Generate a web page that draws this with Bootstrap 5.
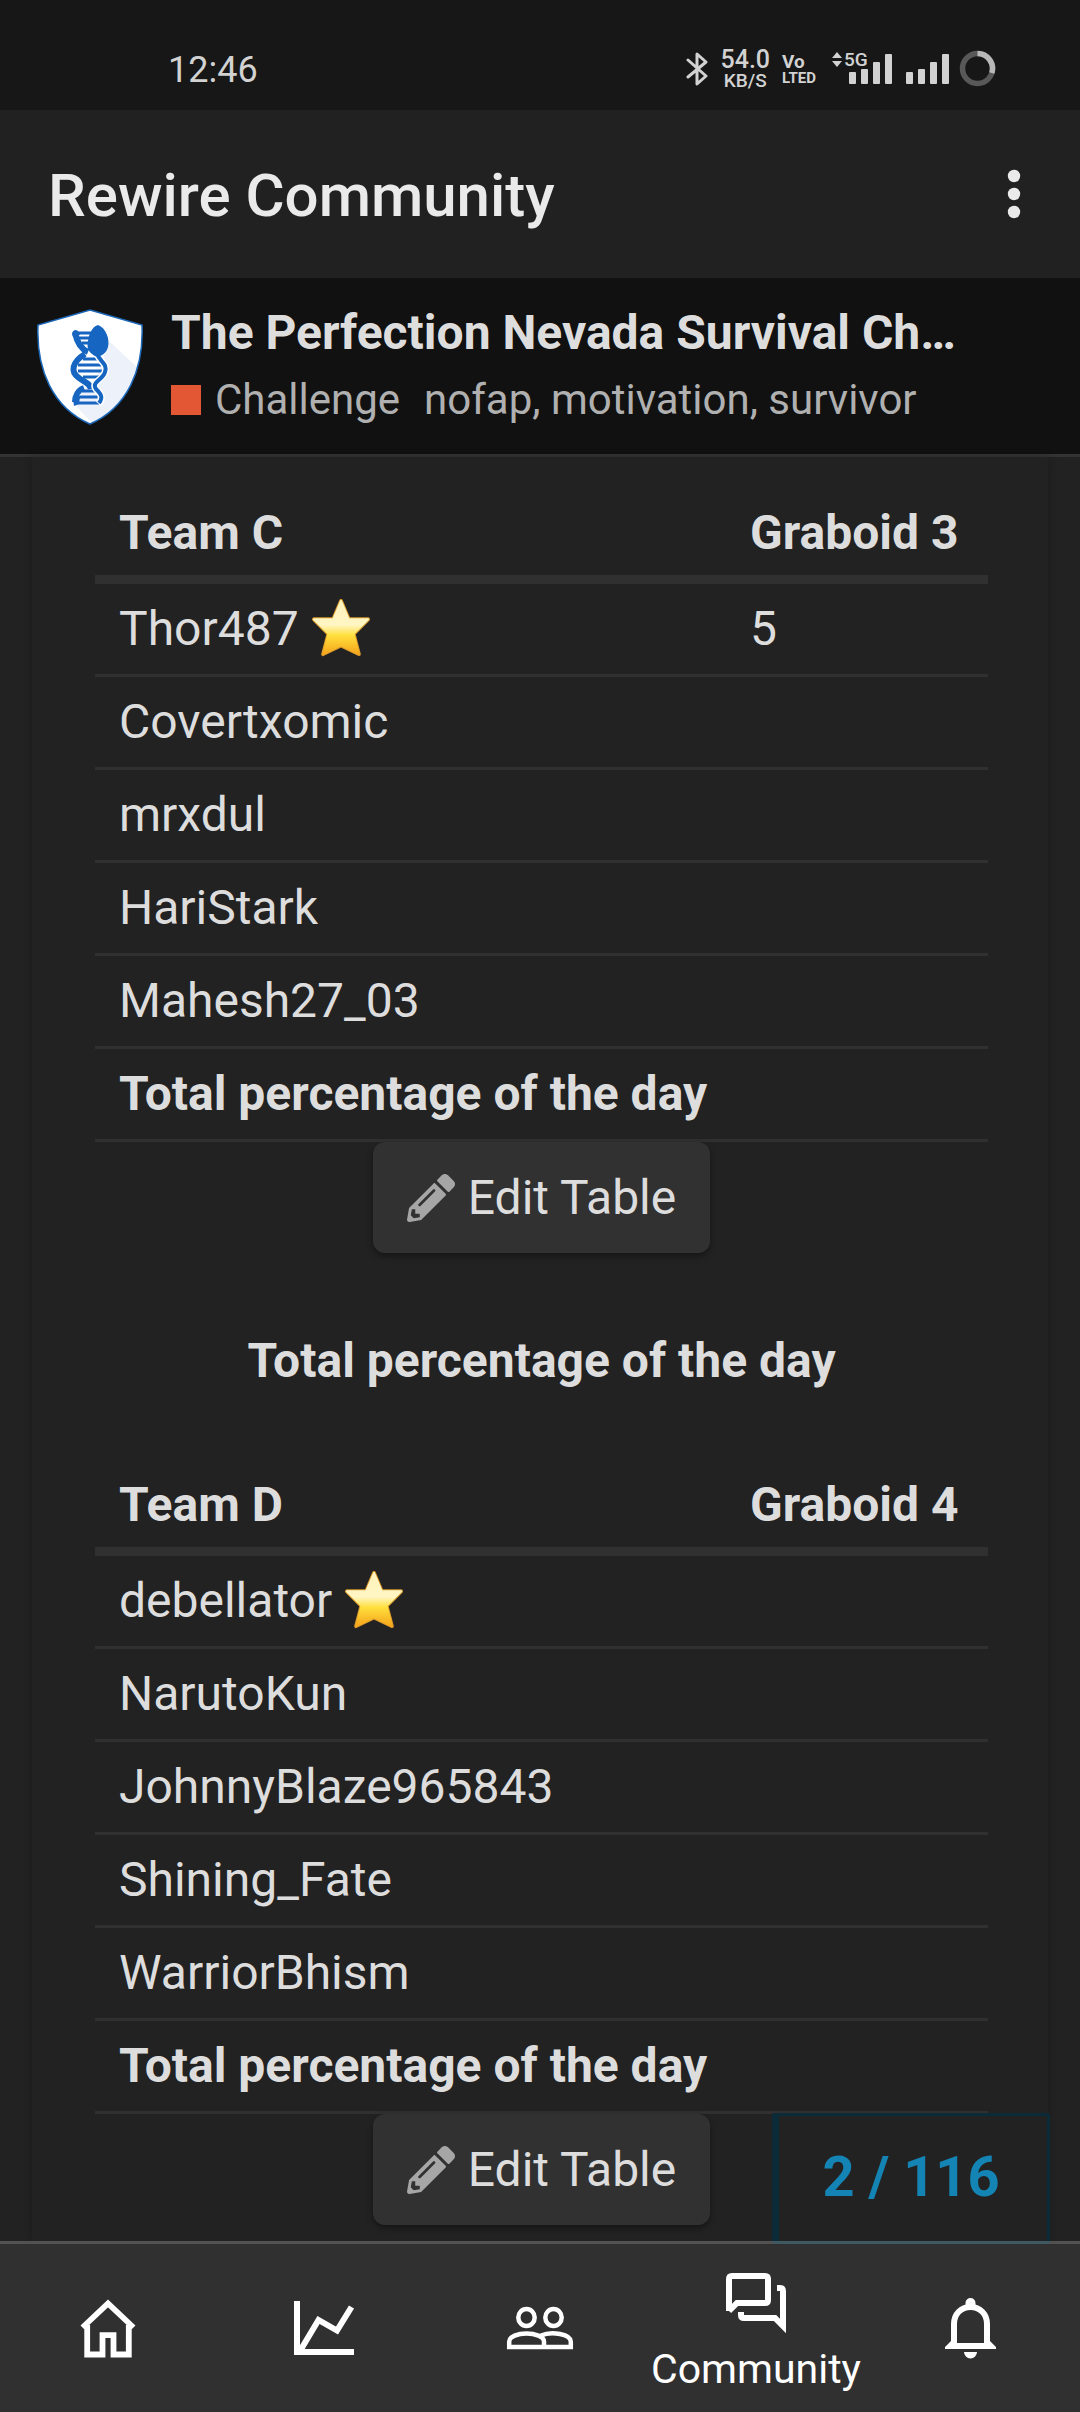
<!DOCTYPE html>
<html lang="en">
<head>
<meta charset="utf-8">
<meta name="viewport" content="width=device-width, initial-scale=1">
<title>Rewire Community</title>
<link href="https://cdn.jsdelivr.net/npm/bootstrap@5.3.0/dist/css/bootstrap.min.css" rel="stylesheet">
<style>
  body { background: #222; color: #ddd; font-family: Roboto, "Noto Sans", sans-serif; font-size: 48px; line-height: 72px; }
  a { color: inherit; text-decoration: none; }
  svg { flex: none; }
  .status-strip { background: #171717; color: #d2d2d2; height: 110px; padding: 26px 84px 0 168px; }
  .clock-text { font-size: 36px; line-height: 88px; }
  .net-speed { font-size: 25px; line-height: 20px; font-weight: 500; }
  .net-unit { font-size: 19px; line-height: 22px; font-weight: 500; }
  .volte-top { font-size: 19px; line-height: 16px; font-weight: 700; }
  .volte-bottom { font-size: 15px; line-height: 16px; font-weight: 700; }
  .five-g { font-size: 19px; font-weight: 500; }
  .app-bar { background: #212121; color: #eaeaea; height: 168px; padding: 0 40px 0 48px; }
  .app-title { font-size: 60px; line-height: 72px; font-weight: 500; padding-top: 4px; }
  .more-btn { width: 52px; height: 72px; }
  .topic-bar { background: #111; border-bottom: 3px solid #333; padding: 22px 122px 19px 36px; gap: 27px; }
  .topic-title { font-size: 48px; line-height: 65px; font-weight: 700; color: #ddd; }
  .topic-meta { font-size: 42px; line-height: 70px; color: #b0b0b0; }
  .cat-swatch { width: 30px; height: 30px; background: #e45735; margin-right: 14px; }
  .cat-name { margin-right: 24px; }
  .post-body { margin: 0 32px; padding: 30px 60px 19px 63px; box-shadow: 0 0 9px rgba(0,0,0,.2); }
  .team-table { width: 100%; border-collapse: separate; border-spacing: 0; }
  .team-table th, .team-table td { padding: 9px 9px 9px 24px; border-bottom: 3px solid #303030; white-space: nowrap; }
  .team-table thead th { padding-top: 10px; padding-bottom: 6px; border-bottom: 9px solid #303030; }
  .team-table th:last-child, .team-table td:last-child { width: 262px; }
  .team-table svg { margin-top: -8px; }
  .edit-btn { background: #313131; color: #ddd; font-size: 48px; line-height: 71px; padding: 20px 34px; border: 0; border-radius: 12px; box-shadow: 0 3px 6px rgba(0,0,0,.4); gap: 13px; }
  .day-total { margin: 72px 0 62px; }
  .post-progress { right: -2px; bottom: 0; width: 278px; height: 131px; padding: 0 4px 4px 0; border: 3px solid #0a2b37; border-left-width: 7px; background: #222; color: #1484b4; font-size: 56px; font-weight: 700; border-radius: 3px; }
  .tab-strip { height: 171px; margin-top: -3px; border-top: 3px solid rgba(255,255,255,.22); background: #303030; background-clip: padding-box; color: #fff; }
  .tab-label { font-size: 41px; line-height: 44px; font-weight: 400; margin-top: 14px; }
</style>
</head>
<body>
<div class="min-vh-100 d-flex flex-column">
  <div class="status-strip d-flex justify-content-between align-items-start">
    <div class="clock-text">12:46</div>
    <div class="d-flex align-items-start">
      <svg width="22" height="36" viewBox="0 0 22 36" class="mt-4 me-2" fill="none" stroke="#d2d2d2" stroke-width="3" stroke-linejoin="round" stroke-linecap="round"><path d="M2 10l18 16-9 8V4L20 12 2 27"/></svg>
      <div class="text-center mt-4 ms-1"><div class="net-speed">54.0</div><div class="net-unit">KB/S</div></div>
      <div class="mt-4 pt-1 ms-2 ps-1 me-3"><div class="volte-top">Vo</div><div class="volte-bottom">LTED</div></div>
      <svg width="61" height="60" viewBox="831 26 61 60" class="me-2" fill="#d2d2d2"><path d="M831 58l5-6 5 6zM831 61l5 6 5-6z"/><text x="843" y="66" class="five-g">5G</text><rect x="848" y="72" width="7" height="12" rx="1"/><rect x="860" y="69" width="7" height="15" rx="1"/><rect x="872" y="62" width="7" height="22" rx="1"/><rect x="884" y="54" width="7" height="30" rx="1"/></svg>
      <svg width="46" height="60" viewBox="904 26 46 60" class="ms-1 me-2" fill="#d2d2d2"><rect x="905" y="72" width="7" height="12" rx="1"/><rect x="917" y="69" width="7" height="15" rx="1"/><rect x="929" y="62" width="7" height="22" rx="1"/><rect x="941" y="54" width="7" height="30" rx="1"/></svg>
      <svg width="37" height="62" viewBox="958 26 37 62" fill="none" stroke-width="5.500"><circle cx="976.500" cy="68.500" r="15" stroke="#585858"/><path d="M976.500 53.500A15 15 0 0 1 990.800 73" stroke="#b8b8b8"/></svg>
    </div>
  </div>

  <header class="app-bar d-flex align-items-center justify-content-between">
    <h1 class="app-title m-0">Rewire Community</h1>
    <button type="button" class="more-btn btn p-0 d-flex align-items-center justify-content-center" aria-label="More options"><svg width="14" height="50" viewBox="0 0 14 50" fill="#eaeaea"><circle cx="7" cy="7" r="6.200"/><circle cx="7" cy="25" r="6.200"/><circle cx="7" cy="43" r="6.200"/></svg></button>
  </header>

  <div class="topic-bar d-flex align-items-center">
    <a href="#" aria-label="Rewire home"><svg class="d-block" width="108" height="118" viewBox="0 0 108 118">
      <defs><clipPath id="shield"><path d="M54 1L106 16C108 61 91 99 54 115C17 99 0 61 2 16z"/></clipPath></defs>
      <path d="M54 1L106 16C108 61 91 99 54 115C17 99 0 61 2 16z" fill="#fff"/>
      <path clip-path="url(#shield)" d="M73 32L116 72V120H62L36 93L60 70z" fill="#edf2fa"/>
      <path d="M54 1L106 16C108 61 91 99 54 115C17 99 0 61 2 16z" fill="none" stroke="#1c67b8" stroke-width="1.500"/>
      <g transform="translate(0 -3)">
        <g fill="none" stroke="#1665c1">
          <path d="M41 27h15M43 32h12M46 37h8M47 53h15M42 59h23M42 65h24M47 71h18M46 85h15M43 91h21M41 97h22" stroke-width="3"/>
          <path d="M39 27C41 36 45 43 52 46" stroke-width="6"/>
          <path d="M49 48C36 56 34 66 43 72C48 76 54 77 55 83M48 82C42 84 39 90 39 96" stroke-width="6"/>
          <path d="M61 47C63 56 72 57 69 66C67 74 55 76 60 83C64 87 68 91 63 98" stroke="#fff" stroke-width="7"/>
          <path d="M61 47C63 56 72 57 69 66C67 74 55 76 60 83C64 87 68 91 63 97" stroke-width="4"/>
        </g>
        <path d="M62 19C70 22 74 33 72 41C70 48 65 50 61 51C54 48 50 43 52 35C53 27 57 20 62 19z" fill="#1665c1"/>
        <path d="M36 27q2-5 6-2l2 4-7 2zM37 92q4-5 7-1l-1 7-5 2z" fill="#1665c1"/>
      </g>
    </svg></a>
    <div class="overflow-hidden">
      <h2 class="topic-title text-truncate m-0"><a href="#">The Perfection Nevada Survival Ch…</a></h2>
      <div class="topic-meta d-flex align-items-center text-nowrap"><span class="cat-swatch"></span><a href="#" class="cat-name">Challenge</a><span><a href="#">nofap</a>, <a href="#">motivation</a>, <a href="#">survivor</a></span></div>
    </div>
  </div>

  <svg width="0" height="0" class="position-absolute" aria-hidden="true">
    <defs><linearGradient id="gold" x1="0" y1="0" x2="0" y2="1"><stop offset="0" stop-color="#fff3bd"/><stop offset=".45" stop-color="#fff6c4"/><stop offset=".65" stop-color="#ffdf3c"/><stop offset="1" stop-color="#f5a51c"/></linearGradient></defs>
    <symbol id="star" viewBox="0 0 62 62"><path d="M31 3L39 22H59L44 37L49.500 58L31 49L12.500 58L18 37L3 22H23z" fill="url(#gold)" stroke="#d99a2b" stroke-width="4" stroke-linejoin="round"/><path d="M31 3L39 22H59L44 37L49.500 58L31 49L12.500 58L18 37L3 22H23z" fill="url(#gold)" stroke="url(#gold)" stroke-width="2" stroke-linejoin="round"/></symbol>
    <symbol id="pencil" viewBox="0 0 512 512"><path d="M498 142l-46 46c-5 5-12 5-17 0L324 77c-5-5-5-12 0-17l46-46c19-19 49-19 68 0l60 60c19 19 19 49 0 68zm-214-42L22 362 .4 484c-3 16 11 30 28 28l122-22 262-262c5-5 5-12 0-17L301 100c-5-5-13-5-17 0zM124 340c-6-6-6-14 0-20l154-154c6-6 14-6 20 0s6 14 0 20L144 340c-6 6-14 6-20 0zm-36 84h48v36l-65 12-31-31 12-65h36v48z"/></symbol>
  </svg>

  <main class="position-relative flex-grow-1 d-flex flex-column">
    <article class="post-body position-relative flex-grow-1">
      <table class="team-table">
        <thead><tr><th scope="col">Team C</th><th scope="col">Graboid 3</th></tr></thead>
        <tbody>
          <tr><td>Thor487 <svg width="60" height="60" role="img" aria-label="star"><use href="#star"/></svg></td><td>5</td></tr>
          <tr><td>Covertxomic</td><td></td></tr>
          <tr><td>mrxdul</td><td></td></tr>
          <tr><td>HariStark</td><td></td></tr>
          <tr><td>Mahesh27_03</td><td></td></tr>
          <tr><td><strong>Total percentage of the day</strong></td><td></td></tr>
        </tbody>
      </table>
      <button type="button" class="edit-btn d-flex align-items-center mx-auto"><svg width="48" height="48" fill="#a6a6a6"><use href="#pencil"/></svg>Edit Table</button>
      <p class="day-total text-center fw-bold">Total percentage of the day</p>
      <table class="team-table">
        <thead><tr><th scope="col">Team D</th><th scope="col">Graboid 4</th></tr></thead>
        <tbody>
          <tr><td>debellator <svg width="60" height="60" role="img" aria-label="star"><use href="#star"/></svg></td><td></td></tr>
          <tr><td>NarutoKun</td><td></td></tr>
          <tr><td>JohnnyBlaze965843</td><td></td></tr>
          <tr><td>Shining_Fate</td><td></td></tr>
          <tr><td>WarriorBhism</td><td></td></tr>
          <tr><td><strong>Total percentage of the day</strong></td><td></td></tr>
        </tbody>
      </table>
      <button type="button" class="edit-btn d-flex align-items-center mx-auto"><svg width="48" height="48" fill="#a6a6a6"><use href="#pencil"/></svg>Edit Table</button>
      <div class="post-progress position-absolute d-flex align-items-center justify-content-center">2 / 116</div>
    </article>
  </main>

  <nav class="tab-strip position-relative d-flex" aria-label="Main">
    <a href="#" class="col d-flex align-items-center justify-content-center" aria-label="Home"><svg width="72" height="72" viewBox="0 0 72 72" fill="none" stroke="#fff" stroke-width="5.800"><path d="M10.500 35.500L36 11.500L61.500 35.500M15.200 33V62.500H30.500V43.200H41.500V62.500H56.800V33"/></svg></a>
    <a href="#" class="col d-flex align-items-center justify-content-center" aria-label="Progress"><svg width="72" height="72" viewBox="0 0 72 72" fill="none" stroke="#fff" stroke-width="6"><path d="M9 9V60H66M12 59L30.500 28L49 38.500L63.500 15"/></svg></a>
    <a href="#" class="col d-flex align-items-center justify-content-center" aria-label="Friends"><svg width="72" height="72" viewBox="0 0 72 72" fill="none" stroke="#fff" stroke-width="4.500"><ellipse cx="22.500" cy="25.500" rx="8.200" ry="8.500"/><ellipse cx="49.500" cy="25.500" rx="8.200" ry="8.500"/><path d="M5.200 55V49.500C5.200 44.500 14 41.500 22.500 41.500S40 44.500 40 49.500V55zM37 43.500C48 38.500 66.800 42.500 66.800 49.500V55H40"/></svg></a>
    <a href="#" class="col d-flex flex-column align-items-center justify-content-center pt-2" aria-current="page"><svg width="60" height="60" viewBox="0 0 60 60" fill="none" stroke="#fff" stroke-width="6"><path d="M3 38V6Q3 3 6 3H39Q42 3 42 6V27Q42 30 39 30H11L3 38"/><path d="M51 15H54Q57 15 57 18V53L49 45H18Q15 45 15 42V39"/></svg><span class="tab-label">Community</span></a>
    <a href="#" class="col d-flex align-items-center justify-content-center" aria-label="Notifications"><svg width="72" height="72" viewBox="0 0 72 72" fill="#fff"><path d="M18 53V32C18 22 25 15 34.500 15S51 22 51 32V53" fill="none" stroke="#fff" stroke-width="6"/><path d="M29.500 15V11a5 5 0 0 1 10 0V15zM9 57V55L15 49V51H54V49L60 55V57zM28 60H41a6.500 6.500 0 0 1-13 0z"/></svg></a>
  </nav>
</div>
<script src="https://cdn.jsdelivr.net/npm/bootstrap@5.3.0/dist/js/bootstrap.bundle.min.js"></script>
</body>
</html>
